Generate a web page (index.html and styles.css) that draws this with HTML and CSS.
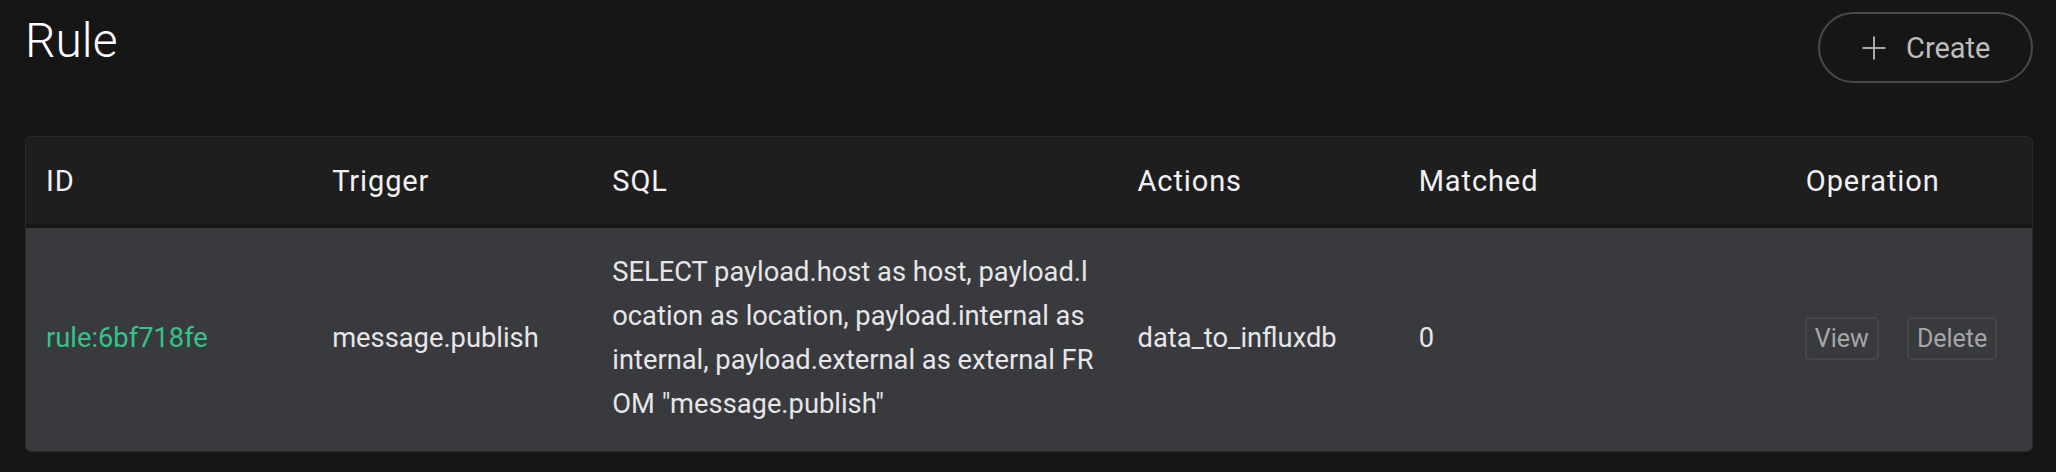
FILE: index.html
```html
<!DOCTYPE html>
<html lang="en">
<head>
<meta charset="utf-8">
<title>Rule</title>
<link rel="stylesheet" href="styles.css">
</head>
<body>
<div class="page">
  <div class="top">
    <h1 class="title">Rule</h1>
    <button class="create">
      <svg class="plus" width="24" height="24" viewBox="0 0 24 24"><path d="M12 0.5V23.5M0.5 12H23.5" stroke="#a9a9ab" stroke-width="2" fill="none"/></svg>
      <span>Create</span>
    </button>
  </div>
  <div class="card">
    <table class="grid">
      <colgroup>
        <col class="c-id"><col class="c-trigger"><col class="c-sql"><col class="c-actions"><col class="c-matched"><col class="c-op">
      </colgroup>
      <thead>
        <tr>
          <th>ID</th><th>Trigger</th><th>SQL</th><th>Actions</th><th>Matched</th><th class="op-h">Operation</th>
        </tr>
      </thead>
      <tbody>
        <tr>
          <td><span class="rid">rule:6bf718fe</span></td>
          <td>message.publish</td>
          <td class="sql">SELECT payload.host as host, payload.location as location, payload.internal as internal, payload.external as external FROM "message.publish"</td>
          <td>data_to_influxdb</td>
          <td>0</td>
          <td class="op-c"><div class="ops"><button class="btn">View</button><button class="btn">Delete</button></div></td>
        </tr>
      </tbody>
    </table>
  </div>
</div>
</body>
</html>
```

FILE: styles.css
```css
html, body {
  margin: 0;
  padding: 0;
  background: #161616;
}
body {
  font-family: Roboto, "Liberation Sans", sans-serif;
  color: #e6e6e8;
}
.page {
  padding: 12px 23px 0 25px;
}
.top {
  display: flex;
  justify-content: space-between;
  align-items: flex-start;
  height: 71px;
}
.title {
  margin: 5px 0 0 0;
  font-size: 48px;
  line-height: 48px;
  font-weight: 300;
  color: #ffffff;
}
.create {
  box-sizing: border-box;
  width: 215px;
  height: 71px;
  border: 2px solid #4a4a4c;
  border-radius: 36px;
  background: transparent;
  display: flex;
  align-items: center;
  padding: 0 0 0 42px;
  gap: 20px;
  font-family: Roboto, "Liberation Sans", sans-serif;
  font-size: 29px;
  color: #bdbdbf;
  cursor: pointer;
}
.create .plus {
  flex: none;
}
.card {
  margin-top: 53px;
  border: 1px solid #2a2a2c;
  border-radius: 6px;
  overflow: hidden;
  background: #1f1e1f;
}
.grid {
  width: 100%;
  border-collapse: collapse;
  table-layout: fixed;
}
.c-id { width: 286px; }
.c-trigger { width: 280px; }
.c-sql { width: 525px; }
.c-actions { width: 281px; }
.c-matched { width: 385px; }
.c-op { width: 248px; }
th {
  height: 87px;
  padding: 0 20px;
  text-align: left;
  font-size: 29px;
  line-height: 40px;
  font-weight: 400;
  letter-spacing: 0.9px;
  color: #f2f2f4;
  background: #1f1e1f;
  border-bottom: 4px solid #161616;
  vertical-align: middle;
}
td {
  padding: 22px 20px 25px 20px;
  font-size: 27.3px;
  line-height: 44px;
  background: #393a3e;
  color: #e6e6e8;
  vertical-align: middle;
}
.sql {
  word-break: break-all;
  padding-right: 22px;
}
.rid {
  color: #34c388;
}
.op-h, .op-c {
  padding-left: 22px;
}
.ops {
  display: flex;
  gap: 28px;
  margin-left: -1px;
}
.btn {
  box-sizing: border-box;
  height: 43px;
  padding: 0 8px;
  border: 2px solid #46474b;
  border-radius: 5px;
  background: transparent;
  font-family: Roboto, "Liberation Sans", sans-serif;
  font-size: 25px;
  color: #a6a6a9;
}
```
